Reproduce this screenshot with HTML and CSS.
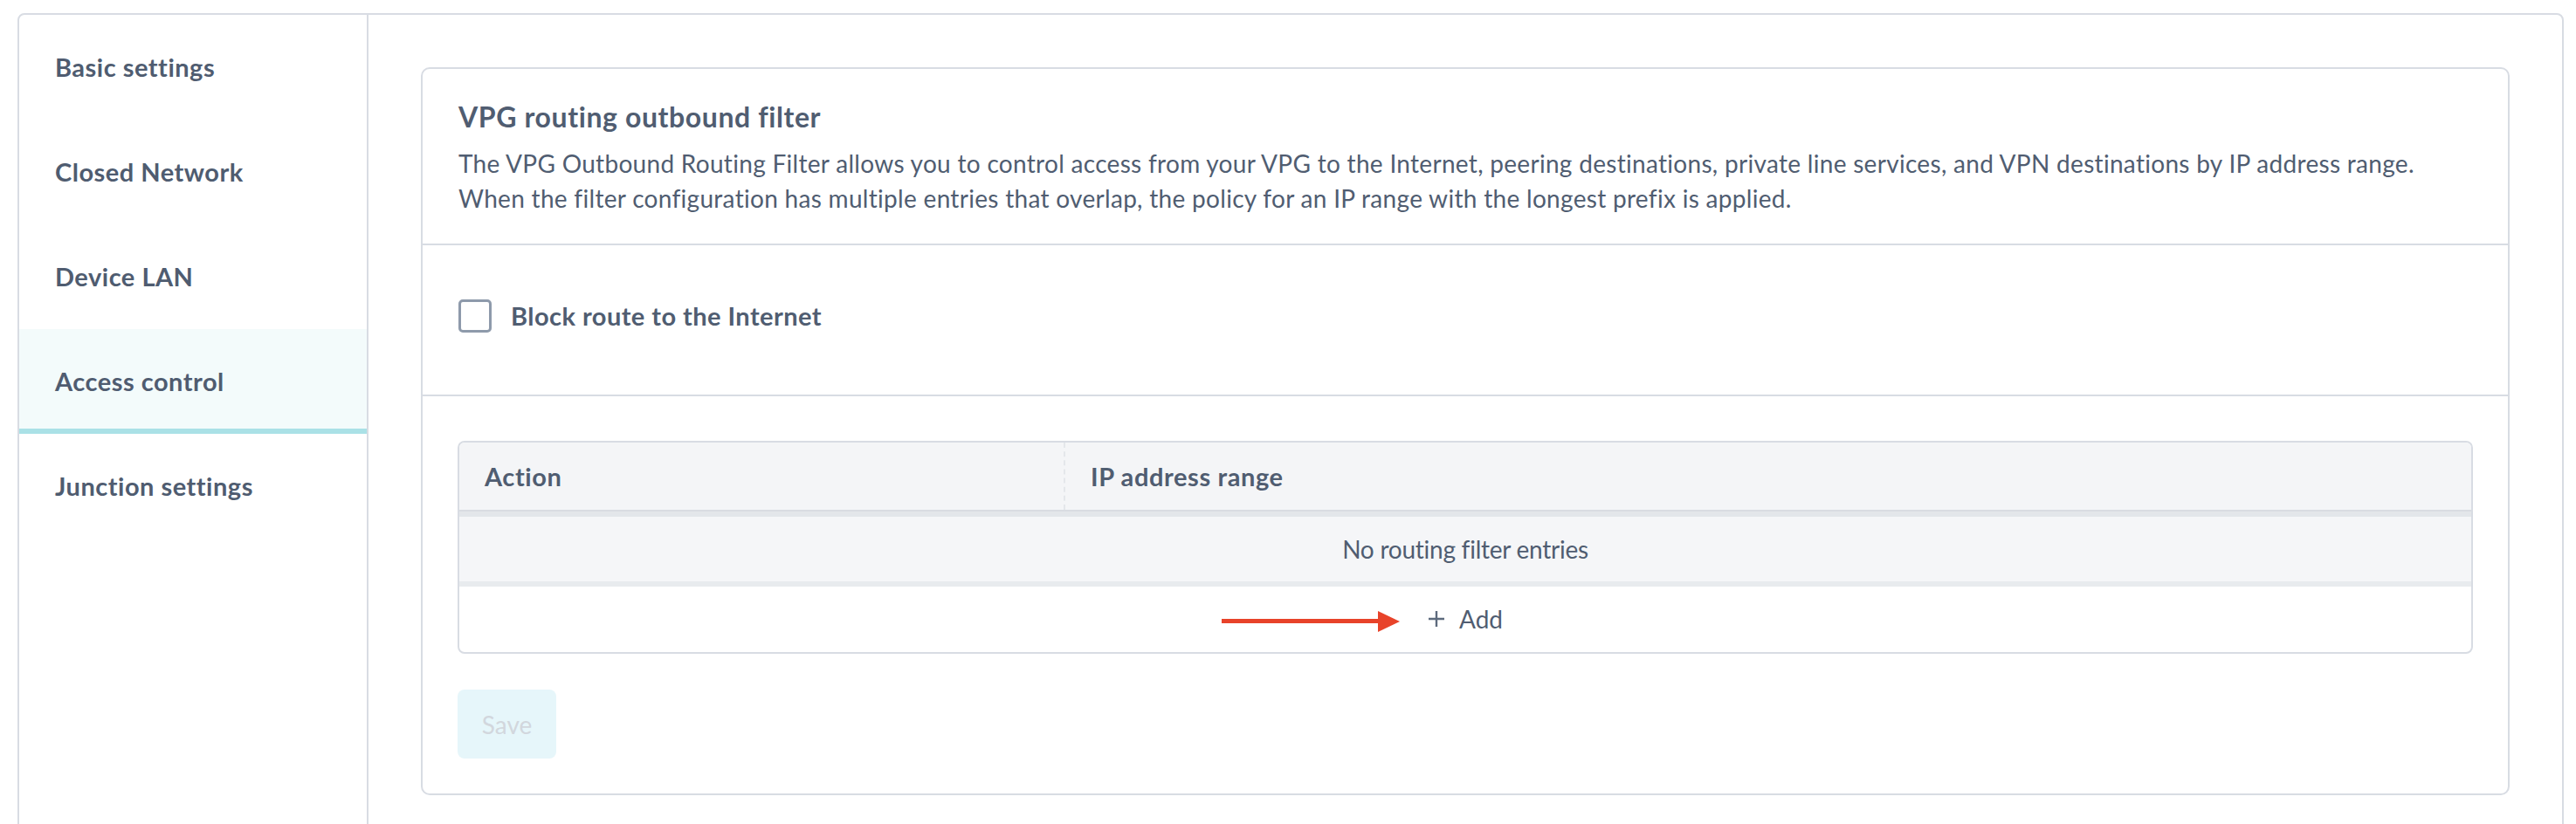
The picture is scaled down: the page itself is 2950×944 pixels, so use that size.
FILE: index.html
```html
<!DOCTYPE html>
<html lang="en">
<head>
<meta charset="utf-8">
<title>VPG routing outbound filter</title>
<link rel="stylesheet" href="styles.css">
</head>
<body>
<div class="frame">
  <nav class="sidebar">
    <div class="nav-item">Basic settings</div>
    <div class="nav-item">Closed Network</div>
    <div class="nav-item">Device LAN</div>
    <div class="nav-item active">Access control</div>
    <div class="nav-item">Junction settings</div>
  </nav>
  <main class="main">
    <section class="card">
      <header class="card-head">
        <h2 class="card-title">VPG routing outbound filter</h2>
        <p class="card-desc">The VPG Outbound Routing Filter allows you to control access from your VPG to the Internet, peering destinations, private line services, and VPN destinations by IP address range.<br>When the filter configuration has multiple entries that overlap, the policy for an IP range with the longest prefix is applied.</p>
      </header>
      <div class="card-check">
        <label class="check">
          <span class="check-box"></span>
          <span class="check-label">Block route to the Internet</span>
        </label>
      </div>
      <div class="card-body">
        <div class="table">
          <div class="t-head">
            <div class="th th-action">Action</div>
            <div class="th th-range">IP address range</div>
          </div>
          <div class="t-empty">No routing filter entries</div>
          <div class="t-add">
            <span class="add-btn">
              <span class="arrow"><span class="arrow-line"></span><span class="arrow-head"></span></span>
              <svg class="plus" viewBox="0 0 20 20" width="20" height="20"><path d="M10 1v18M1 10h18" stroke="currentColor" stroke-width="2.4" fill="none"/></svg>
              <span>Add</span>
            </span>
          </div>
        </div>
        <button class="save" disabled>Save</button>
      </div>
    </section>
  </main>
</div>
</body>
</html>
```

FILE: styles.css
```css
html, body {
  margin: 0;
  padding: 0;
  background: #ffffff;
  overflow: hidden;
}
body {
  font-family: Lato, "Liberation Sans", sans-serif;
  color: #505d71;
}
.frame {
  margin: 15px 14px 0 20px;
  height: 960px;
  border: 2px solid #d8dce3;
  border-radius: 8px;
  display: flex;
  box-sizing: border-box;
}
.sidebar {
  width: 400px;
  flex: none;
  border-right: 2px solid #d8dce3;
  box-sizing: border-box;
}
.nav-item {
  height: 120px;
  box-sizing: border-box;
  padding: 6px 0 0 41px;
  line-height: 108px;
  font-size: 29px;
  letter-spacing: 0.5px;
  font-weight: 700;
  border-bottom: 6px solid transparent;
  color: #4f5c70;
}
.nav-item.active {
  background: #f3fbfb;
  border-bottom-color: #aae1e6;
}
.main {
  flex: 1;
  padding: 60px;
  box-sizing: border-box;
}
.card {
  border: 2px solid #d8dce3;
  border-radius: 10px;
}
.card-head {
  padding: 35px 40px 32px 41px;
  border-bottom: 2px solid #d8dce3;
}
.card-title {
  margin: 0;
  font-size: 32px;
  letter-spacing: 0.6px;
  line-height: 40px;
  font-weight: 700;
}
.card-desc {
  margin: 13px 0 0;
  font-size: 28px;
  letter-spacing: 0.3px;
  line-height: 40px;
  white-space: nowrap;
}
.card-check {
  height: 173px;
  box-sizing: border-box;
  padding: 61px 40px 0 41px;
  border-bottom: 2px solid #d8dce3;
}
.check {
  display: flex;
  align-items: center;
  gap: 22px;
}
.check-box {
  width: 38px;
  height: 38px;
  box-sizing: border-box;
  border: 3px solid #8e9aab;
  border-radius: 5px;
}
.check-label {
  font-size: 29px;
  letter-spacing: 0.45px;
  line-height: 40px;
  font-weight: 700;
}
.card-body {
  padding: 51px 40px 40px 40px;
}
.table {
  border: 2px solid #d8dce3;
  border-radius: 8px;
  overflow: hidden;
}
.t-head {
  display: flex;
  background: #f4f5f7;
  border-bottom: 2px solid #d9dce2;
}
.th {
  height: 77px;
  line-height: 77px;
  font-size: 29px;
  letter-spacing: 0.6px;
  font-weight: 700;
  padding-left: 29px;
  box-sizing: border-box;
}
.th-action {
  width: 692px;
  flex: none;
}
.th-range {
  flex: 1;
  border-left: 2px dashed #e4e7eb;
  padding-left: 29px;
}
.t-empty {
  border-top: 6px solid #e3e6ea;
  background: #f5f6f8;
  height: 80px;
  box-sizing: border-box;
  padding-top: 1px;
  line-height: 73px;
  text-align: center;
  font-size: 28px;
  letter-spacing: -0.25px;
}
.t-add {
  border-top: 6px solid #e8ebee;
  height: 81px;
  box-sizing: border-box;
  line-height: 75px;
  text-align: center;
  font-size: 28px;
}
.add-btn {
  position: relative;
  display: inline-flex;
  align-items: center;
  gap: 16px;
  vertical-align: top;
}
.plus {
  color: #5d6a7d;
  margin-top: -2px;
}
.arrow {
  position: absolute;
  right: calc(100% + 32px);
  top: 27px;
  width: 204px;
  height: 25px;
  display: flex;
  align-items: center;
}
.arrow-line {
  flex: 1;
  height: 5px;
  background: #e8432a;
}
.arrow-head {
  width: 0;
  height: 0;
  border-top: 12.5px solid transparent;
  border-bottom: 12.5px solid transparent;
  border-left: 25px solid #e8432a;
}
.save {
  margin-top: 41px;
  width: 113px;
  height: 79px;
  border: none;
  border-radius: 8px;
  background: #e6f6fa;
  color: #d2d7dd;
  font-family: Lato, "Liberation Sans", sans-serif;
  font-size: 28px;
  padding: 0;
  display: block;
}
```
